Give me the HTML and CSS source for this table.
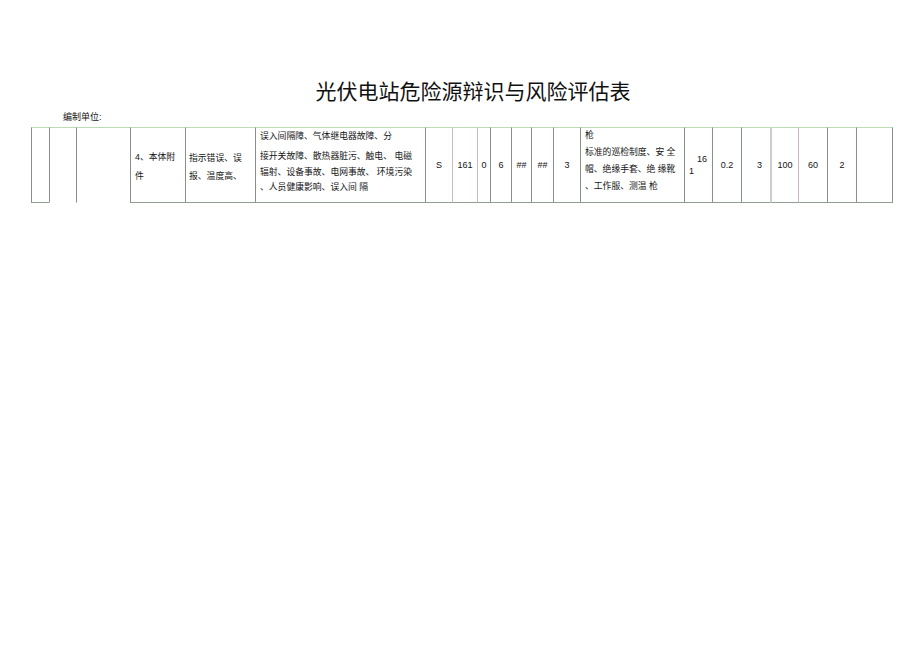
FILE: index.html
```html
<!DOCTYPE html>
<html lang="zh-CN">
<head>
<meta charset="utf-8">
<title>光伏电站危险源辩识与风险评估表</title>
<link rel="stylesheet" href="styles.css">
</head>
<body>
<div class="page">
  <h1 class="title">光伏电站危险源辩识与风险评估表</h1>
  <div class="unit">编制单位:</div>
  <div class="sheet">
    <div class="cell"></div>
    <div class="cell nobottom"></div>
    <div class="cell nobottom"></div>
    <div class="cell c-item"><div class="l19">4、本体附</div><div class="l19">件</div></div>
    <div class="cell c-cause"><div class="l18">指示错误、误</div><div class="l18">报、温度高、</div></div>
    <div class="cell c-hazard">
      <div class="first">误入间隔障、气体继电器故障、分</div>
      <div class="rest">
        <div>接开关故障、散热器脏污、触电、 电磁</div>
        <div>辐射、设备事故、电网事故、 环境污染</div>
        <div>、人员健康影响、误入间 隔</div>
      </div>
    </div>
    <div class="cell num">S</div>
    <div class="cell num pink">161</div>
    <div class="cell num pink">0</div>
    <div class="cell num">6</div>
    <div class="cell num">##</div>
    <div class="cell num">##</div>
    <div class="cell num">3</div>
    <div class="cell c-measure">
      <div>枪</div>
      <div>标准的巡检制度、安 全</div>
      <div>帽、绝缘手套、绝 缘靴</div>
      <div>、工作服、测温 枪</div>
    </div>
    <div class="cell c-split"><div class="sup">16</div><div class="sub">1</div></div>
    <div class="cell num">0.2</div>
    <div class="cell num right">3</div>
    <div class="cell num light">100</div>
    <div class="cell num pink">60</div>
    <div class="cell num">2</div>
    <div class="cell last"></div>
  </div>
</div>
</body>
</html>
```

FILE: styles.css
```css
html, body {
  margin: 0;
  padding: 0;
  background: #ffffff;
}

body {
  font-family: "Liberation Sans", "Noto Sans CJK SC", sans-serif;
  color: #141414;
}

.page {
  width: 920px;
  height: 650px;
  padding-top: 78px;
  box-sizing: border-box;
}

.title {
  margin: 0;
  padding-left: 26px;
  font-family: "Noto Sans CJK SC", sans-serif;
  font-weight: 400;
  font-size: 21px;
  line-height: 24px;
  text-align: center;
  color: #111111;
}

.unit {
  margin-top: 9px;
  padding-left: 63px;
  font-size: 9px;
  line-height: 12px;
}

.sheet {
  margin-top: 4px;
  margin-left: 31px;
  display: grid;
  grid-template-columns: 18px 27px 54px 55px 70px 170px 27px 25px 13px 21px 20px 22px 27px 104px 28px 29px 29px 28px 29px 29px 37px;
  grid-template-rows: 76px;
  width: 862px;
}

.cell {
  box-sizing: border-box;
  border-left: 1px solid #86908a;
  border-top: 1px solid #bcdcb4;
  border-bottom: 1px solid #929e92;
  font-size: 8.8px;
  white-space: nowrap;
  overflow: visible;
}

.cell.nobottom {
  border-bottom-color: transparent;
}

.cell.pink {
  border-left-color: #cbb6cb;
}

.cell.light {
  border-left: 2px solid #c8d0c8;
}

.cell.last {
  border-right: 1px solid #86908a;
}

.c-item {
  padding: 20px 0 0 4px;
}

.l19 {
  line-height: 19px;
}

.c-cause {
  padding: 21px 0 0 3px;
}

.l18 {
  line-height: 18px;
}

.c-hazard {
  padding: 0 0 0 4px;
  line-height: 16px;
}

.c-hazard .rest {
  margin-top: 5px;
  line-height: 15.5px;
}

.num {
  display: flex;
  align-items: center;
  justify-content: center;
  font-size: 9px;
}

.num.right {
  justify-content: flex-end;
  padding-right: 8px;
}

.c-measure {
  padding: 0 0 0 4px;
  line-height: 17px;
}

.c-measure > div:first-child {
  margin-top: -1px;
}

.c-split {
  padding-top: 25px;
  font-size: 9px;
  line-height: 12px;
}

.c-split .sup {
  padding-left: 12px;
}

.c-split .sub {
  padding-left: 4px;
}
```
